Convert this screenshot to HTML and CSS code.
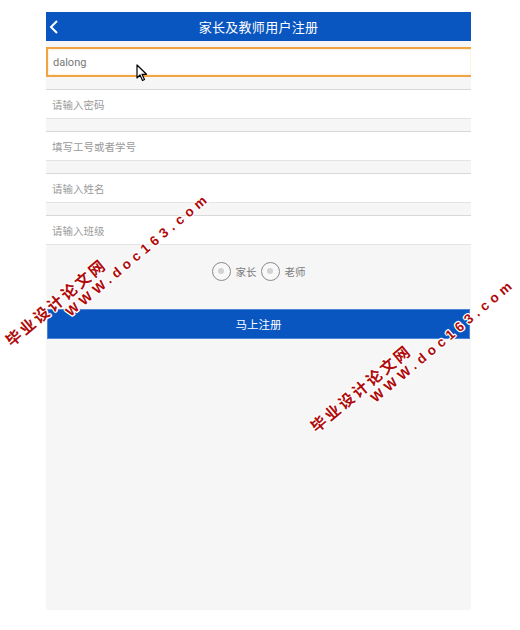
FILE: index.html
```html
<!DOCTYPE html>
<html lang="zh">
<head>
<meta charset="utf-8">
<link rel="stylesheet" href="styles.css">
</head>
<body>
<div class="screen">
  <div class="header">
    <svg class="back" width="10" height="14" viewBox="0 0 10 14"><polyline points="8,1 2,7 8,13" fill="none" stroke="#fff" stroke-width="2"/></svg>
    <div class="title">家长及教师用户注册</div>
    <div></div>
  </div>
  <div class="form">
    <div class="field focused"><span class="value">dalong</span></div>
    <div class="field"><span class="ph">请输入密码</span></div>
    <div class="field"><span class="ph">填写工号或者学号</span></div>
    <div class="field"><span class="ph">请输入姓名</span></div>
    <div class="field"><span class="ph">请输入班级</span></div>
  </div>
  <div class="roles">
    <span class="radio"></span><span class="role">家长</span>
    <span class="radio"></span><span class="role">老师</span>
  </div>
  <div class="submit">马上注册</div>
</div>
<svg class="cursor" width="12" height="18" viewBox="0 0 12 18"><path d="M1 1 L1 14 L4 11 L6.5 16.5 L8.5 15.5 L6 10.3 L10.5 10.3 Z" fill="#fff" stroke="#000" stroke-width="1.2" stroke-linejoin="round"/></svg>
<div class="wm wm-cn wm1">毕业设计论文网</div>
<div class="wm wm-en wm1e">WWW.doc163.com</div>
<div class="wm wm-cn wm2">毕业设计论文网</div>
<div class="wm wm-en wm2e">WWW.doc163.com</div>
</body>
</html>
```
FILE: styles.css
```css
html, body {
  margin: 0;
  padding: 0;
  background: #fff;
}
body {
  position: relative;
  width: 520px;
  height: 630px;
  overflow: hidden;
  font-family: "Noto Sans CJK SC", "Liberation Sans", sans-serif;
}
.screen {
  margin: 12px 0 0 46px;
  width: 425px;
  height: 598px;
  background: #f6f6f6;
}
.header {
  height: 29px;
  background: #0a56c1;
  display: grid;
  grid-template-columns: 30px 1fr 30px;
  align-items: center;
}
.back {
  margin-left: 3px;
}
.title {
  color: #fff;
  font-size: 13px;
  text-align: center;
  letter-spacing: 0.3px;
}
.form {
  display: flex;
  flex-direction: column;
  gap: 12px;
  padding-top: 6px;
}
.field {
  height: 30px;
  box-sizing: border-box;
  background: #fff;
  border-top: 1px solid #d8d8d8;
  border-bottom: 1px solid #e4e4e4;
  display: flex;
  align-items: center;
  padding-left: 6px;
}
.field.focused {
  border: 2px solid #f0a443;
  border-right: none;
  box-shadow: inset 0 0 2px #f8d3a3;
  padding-left: 5px;
}
.ph {
  color: #9a9a9a;
  font-size: 10.5px;
}
.value {
  color: #777;
  font-family: "Roboto", "Liberation Sans", sans-serif;
  font-size: 11px;
}
.roles {
  height: 50px;
  display: flex;
  align-items: center;
  justify-content: center;
  padding-left: 4px;
  padding-top: 2px;
  box-sizing: border-box;
}
.radio {
  width: 17px;
  height: 17px;
  border: 1.5px solid #8a8a8a;
  border-radius: 50%;
  position: relative;
  display: inline-block;
  background: #f8f8f8;
}
.radio::after {
  content: "";
  position: absolute;
  left: 5.5px;
  top: 5.5px;
  width: 6px;
  height: 6px;
  border-radius: 50%;
  background: #d2d2d2;
}
.role {
  color: #7a7a7a;
  font-size: 10.5px;
  margin: 0 4px 0 5px;
}
.submit {
  margin: 14px 1px 0 1px;
  height: 30px;
  box-sizing: border-box;
  background: #0a56c1;
  border: 1px solid #4a86d6;
  color: #fff;
  font-size: 11.5px;
  display: flex;
  align-items: center;
  justify-content: center;
}
.cursor {
  position: absolute;
  left: 136px;
  top: 64px;
}
.wm {
  position: absolute;
  color: #b00a0a;
  font-weight: bold;
  white-space: nowrap;
  line-height: 16px;
  transform: rotate(-40deg);
  transform-origin: 0 50%;
  text-shadow: 1px 0 #fff, -1px 0 #fff, 0 1px #fff, 0 -1px #fff, 1px 1px #fff, -1px -1px #fff, 1px -1px #fff, -1px 1px #fff;
}
.wm-cn {
  font-size: 15.5px;
  letter-spacing: 2.5px;
}
.wm-en {
  font-family: "Liberation Sans", sans-serif;
  font-size: 13.5px;
  letter-spacing: 4.6px;
}
.wm1 { left: 7px; top: 334px; }
.wm1e { left: 68px; top: 306px; }
.wm2 { left: 312px; top: 420px; }
.wm2e { left: 373px; top: 392px; }
```
